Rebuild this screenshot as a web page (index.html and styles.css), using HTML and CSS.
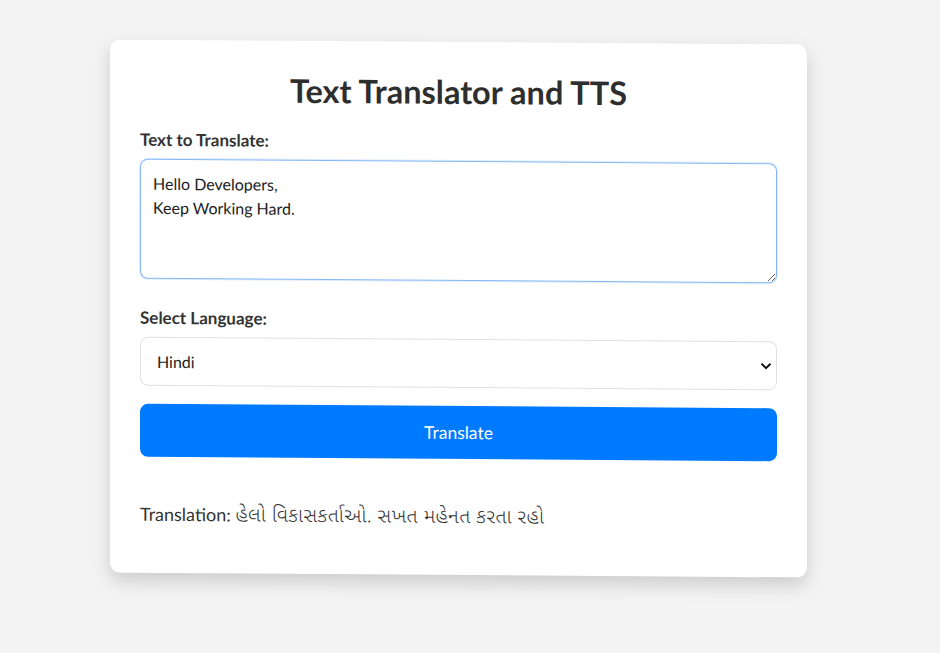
FILE: index.html
```html
<!DOCTYPE html>
<html lang="en">
<head>
<meta charset="utf-8">
<title>Text Translator and TTS</title>
<link rel="stylesheet" href="styles.css">
</head>
<body>
  <main class="card">
    <h1 class="title">Text Translator and TTS</h1>
    <label class="field-label" for="src">Text to Translate:</label>
    <textarea id="src" class="text-input">Hello Developers,
Keep Working Hard.</textarea>
    <label class="field-label label-lang" for="lang">Select Language:</label>
    <div class="select-wrap">
      <select id="lang" class="select-input">
        <option>Hindi</option>
      </select>
      <svg class="chevron" width="12" height="8" viewBox="0 0 12 8" aria-hidden="true"><path d="M1.5 1.5 L6 6 L10.5 1.5" fill="none" stroke="#111" stroke-width="2"/></svg>
    </div>
    <button class="translate-btn" type="button">Translate</button>
    <p class="result">Translation: <span class="gu">હેલો વિકાસકર્તાઓ. સખત મહેનત કરતા રહો</span></p>
  </main>
</body>
</html>
```
FILE: styles.css
```css
html, body {
  margin: 0;
  padding: 0;
}
body {
  background: #f3f3f3;
  font-family: "Segoe UI", Lato, "Noto Sans", "Noto Sans Gujarati", sans-serif;
  color: #333;
  padding-top: 42px;
  padding-left: 110px;
  height: 653px;
  box-sizing: border-box;
  overflow: hidden;
}
.card {
  width: 697px;
  box-sizing: border-box;
  background: #fff;
  border-radius: 10px;
  padding: 30px 30px 1px;
  box-shadow: 0 8px 18px rgba(0, 0, 0, 0.16);
  transform: skewY(0.4deg);
  display: flex;
  flex-direction: column;
}
.title {
  margin: 0 0 20px;
  font-size: 32.5px;
  line-height: 40px;
  font-weight: 700;
  text-align: center;
  color: #2e2e2e;
}
.field-label {
  display: block;
  font-size: 17px;
  line-height: 20px;
  font-weight: 700;
  margin-bottom: 9px;
}
.label-lang {
  margin-top: 29px;
}
.text-input {
  display: block;
  box-sizing: border-box;
  width: 100%;
  height: 120px;
  margin: 0;
  padding: 12px;
  border: 1px solid #86b7f5;
  border-radius: 8px;
  font-family: inherit;
  font-size: 16px;
  line-height: 24px;
  color: #222;
  box-shadow: 0 0 0 1px rgba(134, 183, 245, 0.25);
  outline: none;
}
.select-wrap {
  position: relative;
}
.select-input {
  display: block;
  width: 100%;
  box-sizing: border-box;
  height: 49px;
  margin: 0;
  padding: 0 16px;
  border: 1px solid #e0e0e0;
  border-radius: 8px;
  background: #fff;
  font-family: inherit;
  font-size: 16px;
  color: #222;
  appearance: none;
  -webkit-appearance: none;
  outline: none;
}
.chevron {
  position: absolute;
  right: 5px;
  top: 21px;
}
.translate-btn {
  display: block;
  margin-top: 18px;
  height: 53px;
  width: 100%;
  border: none;
  border-radius: 8px;
  background: #007bff;
  color: #fff;
  font-family: inherit;
  font-size: 17.5px;
}
.result {
  margin: 44px 0 42px;
  font-size: 18px;
  line-height: 27px;
  color: #333;
}
.gu {
  font-family: "Noto Sans Gujarati", "Noto Sans", sans-serif;
  font-size: 20px;
  font-weight: 300;
  letter-spacing: 0.4px;
}
```
